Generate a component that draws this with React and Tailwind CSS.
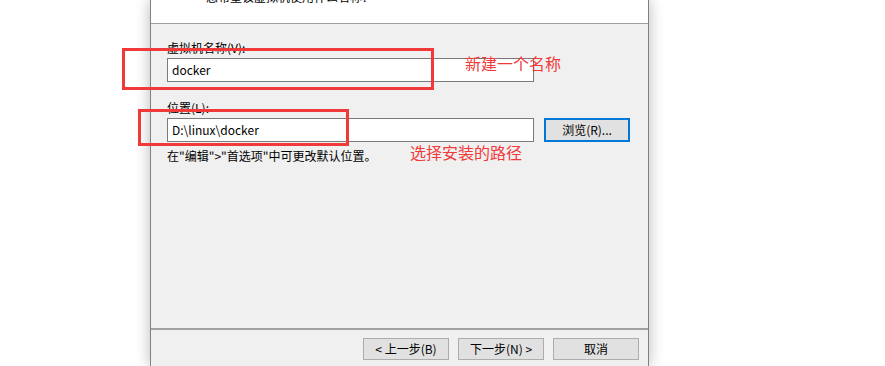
export default function App() {
  const font = { fontFamily: '"Noto Sans CJK SC", "Noto Sans", sans-serif' };
  return (
    <div className="relative w-[885px] h-[366px] overflow-hidden bg-white flex" style={font}>
      <div className="w-[150px] shrink-0" />
      <div className="w-[499px] h-[366px] shrink-0 flex flex-col bg-[#f0f0f0] border-l border-r border-[#808080] shadow-[0_0_14px_rgba(0,0,0,0.28)]">
        <div className="h-[24px] shrink-0 bg-white border-b border-[#a0a0a0] relative overflow-hidden">
          <div className="absolute left-[55px] top-[-11px] text-[12px] leading-[16px] text-black">您希望该虚拟机使用什么名称?</div>
        </div>
        <div className="flex-1 pl-[16px] pt-[16px] flex flex-col">
          <div className="text-[12px] leading-[16px] text-black">虚拟机名称(V):</div>
          <div className="mt-[2px] w-[367px] h-[24px] border border-[#7a7a7a] bg-white flex items-center pl-[4px] text-[12px] text-black">docker</div>
          <div className="mt-[18px] text-[12px] leading-[16px] text-black">位置(L):</div>
          <div className="mt-[2px] flex gap-[10px]">
            <div className="w-[367px] h-[24px] border border-[#7a7a7a] bg-white flex items-center pl-[4px] text-[12px] text-black">D:\linux\docker</div>
            <div className="w-[86px] h-[24px] border-2 border-[#0078d7] bg-[#e1e1e1] flex items-center justify-center text-[12px] text-black">浏览(R)...</div>
          </div>
          <div className="mt-[6px] text-[12px] leading-[16px] text-black">在"编辑"&gt;"首选项"中可更改默认位置。</div>
        </div>
        <div className="h-[38px] shrink-0 border-t-2 border-[#a0a0a0] flex justify-end items-start pt-[8px] pr-[9px] gap-[9px]">
          <div className="w-[86px] h-[22px] border border-[#adadad] bg-[#e1e1e1] flex items-center justify-center text-[12px] text-black">&lt; 上一步(B)</div>
          <div className="w-[86px] h-[22px] border border-[#adadad] bg-[#e1e1e1] flex items-center justify-center text-[12px] text-black">下一步(N) &gt;</div>
          <div className="w-[86px] h-[22px] border border-[#adadad] bg-[#e1e1e1] flex items-center justify-center text-[12px] text-black">取消</div>
        </div>
      </div>
      <div className="absolute left-[122px] top-[48px] w-[312px] h-[42px] border-[3px] border-[#f03a3a]" />
      <div className="absolute left-[465px] top-[53px] text-[16px] leading-[20px] text-[#f03a3a]">新建一个名称</div>
      <div className="absolute left-[138px] top-[109px] w-[211px] h-[37px] border-[3px] border-[#f03a3a]" />
      <div className="absolute left-[410px] top-[142px] text-[16px] leading-[20px] text-[#f03a3a]">选择安装的路径</div>
    </div>
  );
}
